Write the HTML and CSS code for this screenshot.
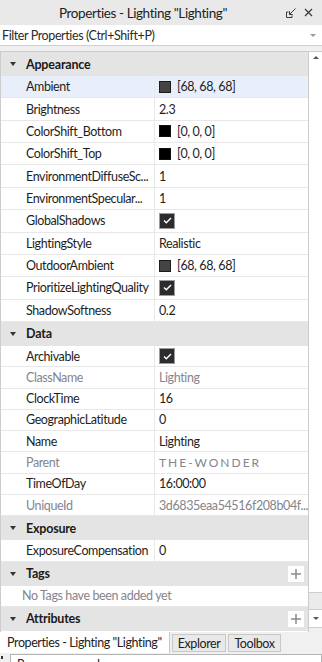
FILE: index.html
```html
<!DOCTYPE html>
<html lang="en">
<head>
  <meta charset="UTF-8" />
  <meta name="viewport" content="width=device-width, initial-scale=1.0"/>
  <title>Properties - Lighting</title>
  <link rel="stylesheet" href="styles.css">
</head>
<body>

  <!-- Title bar -->
  <div class="titlebar">
    <span class="title">Properties - Lighting "Lighting"</span>
    <span class="title-icons">
      <svg width="10" height="10" viewBox="0 0 10 10" fill="none" stroke="#3a3a3a" stroke-width="1">
        <path d="M0.5 4v5.5h5.5M0.5 4h2M6 9.5v-2"/>
        <path d="M9.5 0.5L3.5 6.5M3.5 3.2v3.3h3.3"/>
      </svg>
      <svg width="9" height="9" viewBox="0 0 9 9" fill="none" stroke="#3a3a3a" stroke-width="1.2">
        <path d="M1 1l7 7M8 1l-7 7"/>
      </svg>
    </span>
  </div>

  <div class="filter">
    <span>Filter Properties (Ctrl+Shift+P)</span>
    <span class="caret"></span>
  </div>

  <div class="panel">
    <div class="props">

      <div class="section tall">
        <div class="group"><span class="arrow"></span>Appearance</div>
        <div class="row selected"><div class="name">Ambient</div><div class="value"><span class="swatch gray"></span>[68, 68, 68]</div></div>
        <div class="row"><div class="name">Brightness</div><div class="value">2.3</div></div>
        <div class="row"><div class="name">ColorShift_Bottom</div><div class="value"><span class="swatch"></span>[0, 0, 0]</div></div>
        <div class="row"><div class="name">ColorShift_Top</div><div class="value"><span class="swatch"></span>[0, 0, 0]</div></div>
        <div class="row"><div class="name">EnvironmentDiffuseSc...</div><div class="value">1</div></div>
        <div class="row"><div class="name">EnvironmentSpecular...</div><div class="value">1</div></div>
        <div class="row"><div class="name">GlobalShadows</div><div class="value"><span class="check"><svg width="9" height="7" viewBox="0 0 9 7" fill="none" stroke="#fff" stroke-width="1.4"><path d="M1 3.5l2.3 2.3L8 1"/></svg></span></div></div>
        <div class="row"><div class="name">LightingStyle</div><div class="value">Realistic</div></div>
        <div class="row"><div class="name">OutdoorAmbient</div><div class="value"><span class="swatch gray"></span>[68, 68, 68]</div></div>
        <div class="row"><div class="name">PrioritizeLightingQuality</div><div class="value"><span class="check"><svg width="9" height="7" viewBox="0 0 9 7" fill="none" stroke="#fff" stroke-width="1.4"><path d="M1 3.5l2.3 2.3L8 1"/></svg></span></div></div>
        <div class="row"><div class="name">ShadowSoftness</div><div class="value">0.2</div></div>
      </div>

      <div class="section">
        <div class="group"><span class="arrow"></span>Data</div>
        <div class="row"><div class="name">Archivable</div><div class="value"><span class="check"><svg width="9" height="7" viewBox="0 0 9 7" fill="none" stroke="#fff" stroke-width="1.4"><path d="M1 3.5l2.3 2.3L8 1"/></svg></span></div></div>
        <div class="row disabled"><div class="name">ClassName</div><div class="value">Lighting</div></div>
        <div class="row"><div class="name">ClockTime</div><div class="value">16</div></div>
        <div class="row"><div class="name">GeographicLatitude</div><div class="value">0</div></div>
        <div class="row"><div class="name">Name</div><div class="value">Lighting</div></div>
        <div class="row disabled"><div class="name">Parent</div><div class="value spaced">THE-WONDER</div></div>
        <div class="row"><div class="name">TimeOfDay</div><div class="value">16:00:00</div></div>
        <div class="row disabled"><div class="name">UniqueId</div><div class="value">3d6835eaa54516f208b04f...</div></div>
      </div>

      <div class="section">
        <div class="group"><span class="arrow"></span>Exposure</div>
        <div class="row"><div class="name">ExposureCompensation</div><div class="value">0</div></div>
      </div>

      <div class="section">
        <div class="group"><span class="arrow"></span>Tags<span class="add"><svg width="10" height="10" viewBox="0 0 10 10" stroke="#8c8c8c" stroke-width="1.5"><path d="M5 0v10M0 5h10"/></svg></span></div>
        <div class="empty">No Tags have been added yet</div>
      </div>

      <div class="section">
        <div class="group"><span class="arrow"></span>Attributes<span class="add"><svg width="10" height="10" viewBox="0 0 10 10" stroke="#8c8c8c" stroke-width="1.5"><path d="M5 0v10M0 5h10"/></svg></span></div>
      </div>

    </div>

    <div class="scrollbar">
      <div class="sb-up"><span class="tri-up"></span></div>
      <div class="sb-track"></div>
      <div class="sb-thumb"></div>
      <div class="sb-down"><span class="tri-down"></span></div>
    </div>
  </div>

  <!-- Dock tabs -->
  <div class="tabs">
    <div class="tab active">Properties - Lighting "Lighting"</div>
    <div class="tab">Explorer</div>
    <div class="tab">Toolbox</div>
  </div>

  <div class="cmdbar">
    <span class="grip"></span>
    <div class="cmd-input">Run a command</div>
  </div>

</body>
</html>
```

FILE: styles.css
```css
* {
  box-sizing: border-box;
}

html, body {
  margin: 0;
  height: 100%;
  overflow: hidden;
}

body {
  font-family: Lato, "Noto Sans", sans-serif;
  font-size: 12.5px;
  letter-spacing: -0.4px;
  color: #1e1e1e;
  background-color: #f0f0f0;
}

.titlebar {
  height: 25px;
  display: flex;
  align-items: center;
  background-color: #e9e9e9;
}

.title {
  flex: 1;
  text-align: center;
  font-size: 13.5px;
  color: #222;
}

.title-icons {
  display: flex;
  align-items: center;
  gap: 8px;
  padding-right: 9px;
}

.filter {
  height: 21px;
  display: flex;
  align-items: center;
  justify-content: space-between;
  padding: 0 6px 0 2px;
  background-color: #fff;
  border-bottom: 1px solid #d0d0d0;
  color: #2a2a2a;
}

.caret {
  border-left: 3px solid transparent;
  border-right: 3px solid transparent;
  border-top: 3px solid #9a9a9a;
}

.panel {
  margin-top: 5px;
  height: 581px;
  display: flex;
  border-top: 1px solid #cdcdcd;
}

.props {
  flex: 1;
  overflow: hidden;
  background-color: #fff;
  border-left: 1px solid #cdcdcd;
  border-right: 1px solid #cdcdcd;
}

.group {
  height: 24px;
  display: flex;
  align-items: center;
  padding-left: 9px;
  background-color: #e4e4e5;
  font-weight: bold;
  letter-spacing: -0.2px;
  color: #1a1a1a;
}

.arrow {
  border-left: 3.5px solid transparent;
  border-right: 3.5px solid transparent;
  border-top: 4px solid #333;
  margin-right: 10px;
}

.add {
  margin-left: auto;
  margin-right: 4px;
  width: 16px;
  height: 16px;
  display: flex;
  align-items: center;
  justify-content: center;
  background-color: #fff;
}

.row {
  height: 21.3px;
  display: flex;
  border-bottom: 1px solid #e8e8e8;
}

.tall .row {
  height: 22.36px;
}

.name {
  width: 154px;
  flex-shrink: 0;
  display: flex;
  align-items: center;
  padding-left: 25px;
  border-right: 1px solid #e8e8e8;
  white-space: nowrap;
  overflow: hidden;
}

.value {
  flex: 1;
  display: flex;
  align-items: center;
  gap: 6px;
  padding-left: 4px;
  white-space: nowrap;
  overflow: hidden;
}

.selected {
  background-color: #e8effb;
}

.disabled {
  color: #85858d;
}

.spaced {
  letter-spacing: 2px;
  font-size: 12px;
}

.swatch {
  width: 12px;
  height: 12px;
  background-color: #000;
  border: 1px solid #111;
}

.swatch.gray {
  background-color: #444;
  border-color: #1c1c1c;
}

.check {
  width: 16px;
  height: 16px;
  display: flex;
  align-items: center;
  justify-content: center;
  background-color: #2c2c2e;
  border: 1px solid #9c9ca0;
}

.empty {
  height: 21px;
  display: flex;
  align-items: center;
  padding-left: 21px;
  color: #85858d;
  border-bottom: 1px solid #e8e8e8;
}

.scrollbar {
  width: 13px;
  display: flex;
  flex-direction: column;
  padding-bottom: 4px;
}

.sb-up {
  height: 11px;
  display: flex;
  align-items: center;
  justify-content: center;
  background-color: #fff;
}

.sb-track {
  flex: 1;
  background-color: #fff;
}

.sb-thumb {
  height: 18px;
  background-color: #ebebeb;
  border-top: 1px solid #cdcdcd;
  border-bottom: 1px solid #cdcdcd;
}

.sb-down {
  height: 18px;
  display: flex;
  align-items: center;
  justify-content: center;
  background-color: #fff;
  border-bottom: 1px solid #cdcdcd;
}

.tri-up {
  border-left: 3px solid transparent;
  border-right: 3px solid transparent;
  border-bottom: 3px solid #555;
}

.tri-down {
  border-left: 3px solid transparent;
  border-right: 3px solid transparent;
  border-top: 3px solid #555;
}

.tabs {
  height: 21px;
  display: flex;
  align-items: flex-start;
  gap: 2px;
}

.tab {
  height: 18px;
  margin-top: 2px;
  padding: 0 5px;
  display: flex;
  align-items: center;
  background-color: #e9e9e9;
  border: 1px solid #c8c8c8;
  color: #222;
}

.tab.active {
  height: 21px;
  margin-top: 0;
  padding: 0 7px;
  background-color: #fff;
  border-top: none;
  border-left: none;
  border-bottom: none;
}

.cmdbar {
  height: 30px;
  display: flex;
  padding-top: 1px;
}

.grip {
  width: 2px;
  height: 3px;
  margin: 2px 7px 0 1px;
  background-color: #333;
}

.cmd-input {
  flex: 1;
  height: 24px;
  padding: 2px 6px;
  background-color: #fff;
  border: 1px solid #b4b4b4;
  color: #222;
}
```
